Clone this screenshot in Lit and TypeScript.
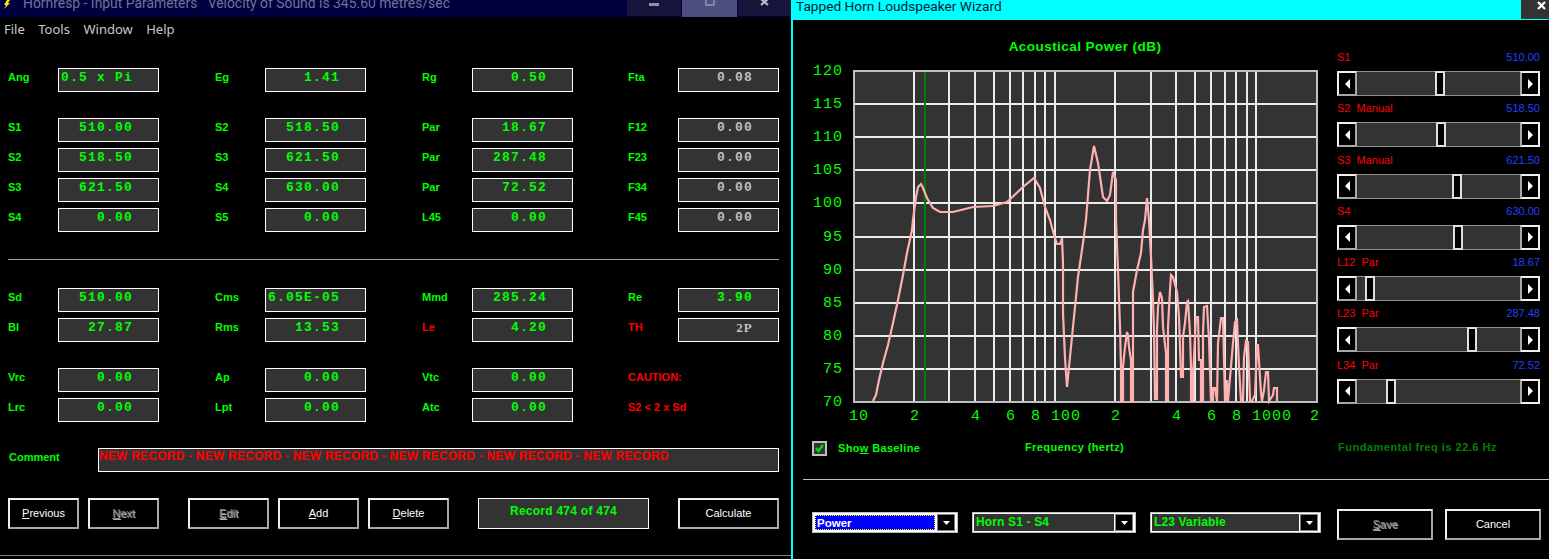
import { LitElement, html, css, svg } from 'lit';
import { customElement } from 'lit/decorators.js';

type Cell = { label: string; value?: string; left?: boolean; gray?: boolean; red?: boolean; serif?: boolean };
const c = (label: string, value?: string, opts: Partial<Cell> = {}): Cell => ({ label, value, ...opts });
const g = { gray: true };

const groups: Cell[][][] = [
  [[c('Ang', '0.5 x Pi', { left: true }), c('Eg', '1.41'), c('Rg', '0.50'), c('Fta', '0.08', g)]],
  [
    [c('S1', '510.00'), c('S2', '518.50'), c('Par', '18.67'), c('F12', '0.00', g)],
    [c('S2', '518.50'), c('S3', '621.50'), c('Par', '287.48'), c('F23', '0.00', g)],
    [c('S3', '621.50'), c('S4', '630.00'), c('Par', '72.52'), c('F34', '0.00', g)],
    [c('S4', '0.00'), c('S5', '0.00'), c('L45', '0.00'), c('F45', '0.00', g)],
  ],
];
const groups2: Cell[][][] = [
  [
    [c('Sd', '510.00'), c('Cms', '6.05E-05', { left: true }), c('Mmd', '285.24'), c('Re', '3.90')],
    [c('Bl', '27.87'), c('Rms', '13.53'), c('Le', '4.20', { red: true }), c('TH', '2P', { red: true, gray: true, serif: true })],
  ],
  [
    [c('Vrc', '0.00'), c('Ap', '0.00'), c('Vtc', '0.00'), c('CAUTION:', undefined, { red: true })],
    [c('Lrc', '0.00'), c('Lpt', '0.00'), c('Atc', '0.00'), c('S2 < 2 x Sd', undefined, { red: true })],
  ],
];

const sliders = [
  { name: 'S1', value: '510.00', thumb: 1435 },
  { name: 'S2  Manual', value: '518.50', thumb: 1436 },
  { name: 'S3  Manual', value: '621.50', thumb: 1452 },
  { name: 'S4', value: '630.00', thumb: 1453 },
  { name: 'L12  Par', value: '18.67', thumb: 1365 },
  { name: 'L23  Par', value: '287.48', thumb: 1467 },
  { name: 'L34  Par', value: '72.52', thumb: 1386 },
];

const gridX = [914, 949, 975, 994, 1010, 1023, 1035, 1045, 1055, 1115, 1151, 1176, 1195, 1211, 1225, 1236, 1247, 1256];
const yTicks = [120, 115, 110, 105, 100, 95, 90, 85, 80, 75, 70];
const xLabels: [string, number][] = [['10', 849], ['2', 910], ['4', 971], ['6', 1006], ['8', 1031], ['100', 1051], ['2', 1111], ['4', 1172], ['6', 1207], ['8', 1232], ['1000', 1252], ['2', 1310]];

const curve = `873,401 876,395 879,380 883,363 888,345 893,323 898,300 903,275 907,253 912,230 913,220 916,197 918,187 921,184 923,188
927,198 933,208 940,212 953,212 973,207 993,206 1007,202 1023,187 1034,178 1040,188 1045,207 1050,220 1054,235 1057,244 1060,244 1062,238
1063,263 1063,313 1065,358 1067,387 1068,377 1072,337 1075,307 1078,277 1083,243 1086,220 1090,170 1094,146 1098,163 1103,197 1107,201 1110,195
1113,172 1116,180 1116,220 1118,270 1120,327 1121,367 1121,402 1123,402 1123,367 1125,347 1127,332 1128,335 1129,347 1131,360 1131,402 1133,402 1133,292
1137,270 1141,253 1143,230 1145,220 1147,198 1149,220 1151,257 1153,300 1154,330 1155,399 1157,399 1157,330 1158,307 1160,292 1162,298 1163,327 1166,353
1166,401 1168,401 1168,327 1170,290 1171,275 1173,277 1177,292 1179,317 1181,377 1183,377 1183,337 1185,323 1187,302 1188,301 1190,333 1191,367 1191,401 1193,401 1193,377 1196,317
1198,317 1199,360 1201,360 1201,401 1203,401 1203,333 1204,307 1207,306 1209,340 1211,401 1213,401 1213,388 1215,388 1217,401 1218,343 1221,318 1223,318 1225,401 1227,401 1227,380
1228,401 1233,343 1235,322 1237,320 1239,367 1241,401 1243,401 1244,357 1246,341 1248,342 1250,401 1252,401 1255,395 1257,345 1258,345 1261,393 1262,401 1264,390
1266,372 1268,372 1269,401 1273,395 1274,388 1277,388 1277,401`;

const comment = Array(6).fill('NEW RECORD').join(' - ');

@customElement('app-root')
export class AppRoot extends LitElement {
  static styles = css`
    :host {
      display: flex;
      width: 1549px;
      height: 559px;
      overflow: hidden;
      background: #000;
      font-family: 'Liberation Sans', Arial, sans-serif;
      font-size: 11px;
    }

    /* left window */
    .left {
      width: 791px;
      height: 559px;
      flex: none;
      display: flex;
      flex-direction: column;
    }
    .title {
      height: 17px;
      flex: none;
      background: #00003f;
      display: flex;
      overflow: hidden;
    }
    .bolt {
      margin-left: 2px;
      width: 9px;
      height: 9px;
      flex: none;
    }
    .title-text {
      margin: -7px 0 0 12px;
      flex: 1;
      font: 13.9px/20px Roboto, sans-serif;
      color: #6f7299;
      white-space: pre;
    }
    .winbtn {
      height: 16px;
      margin-right: 1px;
      background: #15153c;
      flex: none;
      display: flex;
      justify-content: center;
      overflow: hidden;
    }
    .winbtn.max {
      height: 17px;
      background: #4f4f7f;
    }
    .menu {
      height: 24px;
      display: flex;
      align-items: center;
      font: 13px 'Noto Sans', sans-serif;
      color: #c8c8c8;
      padding-left: 4px;
    }
    .menu span {
      margin-right: 13.5px;
    }
    .form {
      display: flex;
      flex-direction: column;
      padding: 27px 0 0 8px;
    }
    .group {
      display: flex;
      flex-direction: column;
      gap: 6px;
      margin-bottom: 26px;
    }
    .row {
      display: flex;
    }
    .cell {
      width: 207px;
      display: flex;
      flex: none;
    }
    .cell:nth-child(3) {
      width: 206px;
    }
    .lab {
      width: 50px;
      flex: none;
      font-weight: 700;
      color: #0f0;
      line-height: 18px;
      white-space: nowrap;
    }
    .lab.red {
      color: #f00;
    }
    .field {
      width: 101px;
      height: 24px;
      box-sizing: border-box;
      flex: none;
      border: 1px solid #fff;
      background: #333;
      color: #0f0;
      font: 700 13px/17px 'Liberation Mono', monospace;
      letter-spacing: 1.2px;
      text-align: right;
      padding-right: 25px;
      white-space: pre;
    }
    .field.left {
      text-align: left;
      padding: 0 0 0 2px;
    }
    .field.gray {
      color: #c0c0c0;
    }
    .field.serif {
      font-family: 'Liberation Serif', serif;
    }
    .rule {
      height: 1px;
      background: #a0a0a0;
      width: 771px;
      margin: 1px 0 28px;
    }
    .comment-row {
      display: flex;
      margin-bottom: 26px;
    }
    .comment-row .lab {
      width: 90px;
      padding-left: 1px;
      box-sizing: border-box;
    }
    .comment {
      width: 681px;
      height: 24px;
      box-sizing: border-box;
      border: 1px solid #fff;
      background: #333;
      color: #f00;
      font-weight: 700;
      font-size: 12px;
      line-height: 15px;
      letter-spacing: 0.22px;
      white-space: nowrap;
      overflow: hidden;
    }
    .buttons {
      display: flex;
    }
    .btn {
      height: 31px;
      box-sizing: border-box;
      border: 2px solid #f0f0f0;
      border-right-color: #a8a8a8;
      border-bottom-color: #a8a8a8;
      padding-bottom: 2px;
      display: flex;
      align-items: center;
      justify-content: center;
      color: #fff;
      font-size: 11px;
      flex: none;
    }
    .btn.off {
      color: #858585;
      text-shadow: 1px 1px 0 #b0b0b0;
    }
    .btn u {
      text-underline-offset: 1px;
    }
    .record {
      width: 171px;
      height: 31px;
      box-sizing: border-box;
      border: 1px solid #fff;
      background: #333;
      color: #0f0;
      font-weight: 700;
      font-size: 12px;
      letter-spacing: 0.25px;
      text-align: center;
      line-height: 24px;
      flex: none;
    }
    .bottom-line {
      height: 1px;
      background: #808080;
      margin-top: 26px;
    }

    /* right window */
    .right {
      flex: 1;
      height: 559px;
      position: relative;
      border-left: 2px solid #0ff;
      display: flex;
      flex-direction: column;
    }
    .rtitle {
      height: 20px;
      flex: none;
      margin-left: -2px;
      background: #0ff;
      display: flex;
      justify-content: space-between;
      overflow: hidden;
    }
    .rtitle span {
      margin: -4px 0 0 5px;
      font: 13.7px/20px Roboto, sans-serif;
      color: #002030;
    }
    .close {
      width: 28px;
      height: 19px;
      background: #333;
      flex: none;
    }
    .body {
      height: 401px;
      flex: none;
      display: flex;
    }
    .chart {
      width: 544px;
      height: 401px;
      display: block;
      flex: none;
      overflow: visible;
    }
    .plot-bg {
      fill: #333;
      stroke: #c0c0c0;
      stroke-width: 2;
    }
    .grid {
      stroke: #ececec;
      stroke-width: 2;
      shape-rendering: crispEdges;
    }
    .marker {
      stroke: #008000;
      stroke-width: 2;
      shape-rendering: crispEdges;
    }
    .curve {
      fill: none;
      stroke: #ffb0b0;
      stroke-width: 2.2;
    }
    .tick {
      fill: #0f0;
      font: 15px 'Liberation Mono', monospace;
      letter-spacing: 1px;
    }
    .chart-title {
      fill: #0f0;
      font: 700 13.5px 'Liberation Sans', sans-serif;
      letter-spacing: 0.45px;
      text-anchor: middle;
    }
    .sliders {
      width: 203px;
      flex: none;
      padding-top: 30px;
      display: grid;
      grid-auto-rows: 51.28px;
    }
    .slabel {
      display: flex;
      justify-content: space-between;
      line-height: 14px;
      height: 14px;
      margin-bottom: 7px;
      white-space: pre;
      color: #f00;
    }
    .slabel b {
      font-weight: 400;
      color: #2040ff;
    }
    .slider {
      height: 25px;
      display: flex;
      position: relative;
    }
    .arrow {
      width: 20px;
      height: 25px;
      box-sizing: border-box;
      flex: none;
      background: #000;
      border: 2px solid #f0f0f0;
      border-right-color: #a8a8a8;
      border-bottom-color: #a8a8a8;
      display: flex;
      align-items: center;
      justify-content: center;
    }
    .arrow.next {
      border: 2px solid #f0f0f0;
      border-left-color: #a8a8a8;
    }
    .track {
      flex: 1;
      background: #333;
      border-top: 1px solid #909090;
      border-bottom: 1px solid #909090;
    }
    .thumb {
      position: absolute;
      top: 0;
      width: 10px;
      height: 25px;
      box-sizing: border-box;
      background: #000;
      border: 2px solid #e0e0e0;
    }
    .meta {
      height: 15px;
      margin-top: 20px;
      display: flex;
      align-items: center;
      color: #0f0;
      font-weight: 700;
      font-size: 11px;
      letter-spacing: 0.5px;
      padding-left: 19px;
      flex: none;
    }
    .check {
      width: 15px;
      height: 15px;
      box-sizing: border-box;
      border: 2px solid #c0c0c0;
      background: #333;
      flex: none;
      display: flex;
      align-items: center;
      justify-content: center;
      margin-right: 11px;
    }
    .meta .baseline {
      width: 187px;
      flex: none;
      letter-spacing: 0.35px;
      margin-bottom: 2px;
    }
    .meta .freq {
      width: 313px;
      flex: none;
      letter-spacing: 0.4px;
      margin-bottom: 3px;
    }
    .meta .fund {
      color: #008000;
      margin-bottom: 3px;
    }
    .rrule {
      height: 1px;
      background: #c0c0c0;
      margin: 23px 0 0 10px;
      flex: none;
    }
    .controls {
      display: flex;
      align-items: flex-start;
      margin-top: 29px;
      padding-left: 19px;
    }
    .combo {
      height: 21px;
      box-sizing: border-box;
      margin-top: 3px;
      border: 1px solid #c0c0c0;
      background: #fff;
      padding: 1px 2px 1px 1px;
      display: flex;
      flex: none;
    }
    .combo-text {
      flex: 1;
      background: #333;
      color: #0f0;
      font-weight: 700;
      font-size: 12px;
      line-height: 17px;
      letter-spacing: 0.15px;
      padding-left: 2px;
      white-space: nowrap;
    }
    .combo-text.sel {
      background: #00f;
      color: #fff;
      border: 1px dotted #ff0;
      margin: 1px;
      font-size: 11.5px;
      letter-spacing: 0;
      line-height: 14px;
      padding-left: 1px;
    }
    .combo-drop {
      width: 18px;
      box-sizing: border-box;
      flex: none;
      margin-left: 1px;
      background: #000;
      border: 1px solid #808080;
      display: flex;
      align-items: center;
      justify-content: center;
    }
  `;

  field(f: Cell) {
    if (f.value === undefined) return html`<div class="cell"><div class="lab red">${f.label}</div></div>`;
    return html`<div class="cell">
      <div class="lab ${f.red ? 'red' : ''}">${f.label}</div>
      <div class="field ${f.left ? 'left' : ''} ${f.gray ? 'gray' : ''} ${f.serif ? 'serif' : ''}">${f.value}</div>
    </div>`;
  }

  renderGroups(list: Cell[][][]) {
    return list.map(
      (rows) => html`<div class="group">
        ${rows.map((r) => html`<div class="row">${r.map((f) => this.field(f))}</div>`)}
      </div>`
    );
  }

  tri(dir: 'l' | 'r' | 'd') {
    const pts = { l: '5,0 5,10 0,5', r: '0,0 0,10 5,5', d: '0,0 7,0 3.5,4' }[dir];
    const w = dir === 'd' ? 7 : 5;
    const h = dir === 'd' ? 4 : 10;
    return html`<svg width=${w} height=${h} viewBox="0 0 ${w} ${h}"><polygon points=${pts} fill="#fff"></polygon></svg>`;
  }

  chart() {
    return html`<svg class="chart" viewBox="793 20 544 401">
      <text class="chart-title" x="1085" y="51">Acoustical Power (dB)</text>
      <rect class="plot-bg" x="854" y="71" width="463" height="331"></rect>
      ${yTicks.slice(1, -1).map((t) => {
        const y = 71 + ((120 - t) / 5) * 33.1;
        return svg`<line class="grid" x1="855" x2="1316" y1=${y} y2=${y}></line>`;
      })}
      ${gridX.map((x) => svg`<line class="grid" x1=${x} x2=${x} y1="72" y2="401"></line>`)}
      <line class="marker" x1="925" x2="925" y1="72" y2="401"></line>
      <polyline class="curve" points=${curve}></polyline>
      ${yTicks.map((t) => {
        const y = 71 + ((120 - t) / 5) * 33.1 + 4;
        const x = t >= 100 ? 813 : 823;
        return svg`<text class="tick" x=${x} y=${y}>${t}</text>`;
      })}
      ${xLabels.map(([t, x]) => svg`<text class="tick" x=${x} y="420">${t}</text>`)}
    </svg>`;
  }

  render() {
    return html`
      <div class="left">
        <div class="title">
          <svg class="bolt" viewBox="0 0 9 9"><polygon points="5,0 8,0 6,3 8,3 2,9 4,5 2,5" fill="#ffe81a"></polygon></svg>
          <div class="title-text">Hornresp - Input Parameters   Velocity of Sound is 345.60 metres/sec</div>
          <div class="winbtn" style="width:54px">
            <svg width="10" height="6"><rect y="3" width="10" height="3" fill="#8f8fa8"></rect></svg>
          </div>
          <div class="winbtn max" style="width:55px">
            <svg width="10" height="6"><rect x="1" y="-2" width="8" height="7" fill="none" stroke="#8080a8" stroke-width="2"></rect></svg>
          </div>
          <div class="winbtn" style="width:53px;margin:0">
            <svg width="10" height="6"><path d="M1 -1 L8 5 M8 -1 L1 5" stroke="#c0c0d0" stroke-width="2"></path></svg>
          </div>
        </div>
        <div class="menu">
          <span>File</span><span>Tools</span><span>Window</span><span>Help</span>
        </div>
        <div class="form">
          ${this.renderGroups(groups)}
          <div class="rule"></div>
          ${this.renderGroups(groups2)}
          <div class="comment-row">
            <div class="lab">Comment</div>
            <div class="comment">${comment}</div>
          </div>
          <div class="buttons">
            <div class="btn" style="width:71px;margin-right:9px"><span><u>P</u>revious</span></div>
            <div class="btn off" style="width:71px;margin-right:29px"><span><u>N</u>ext</span></div>
            <div class="btn off" style="width:81px;margin-right:9px"><span><u>E</u>dit</span></div>
            <div class="btn" style="width:81px;margin-right:9px"><span><u>A</u>dd</span></div>
            <div class="btn" style="width:81px;margin-right:29px"><span><u>D</u>elete</span></div>
            <div class="record" style="margin-right:29px">Record 474 of 474</div>
            <div class="btn" style="width:101px">Calculate</div>
          </div>
        </div>
        <div class="bottom-line"></div>
      </div>

      <div class="right">
        <div class="rtitle">
          <span>Tapped Horn Loudspeaker Wizard</span>
          <div class="close">
            <svg width="28" height="19"><path d="M17 2 L24 9 M24 2 L17 9" stroke="#fff" stroke-width="2.2"></path></svg>
          </div>
        </div>
        <div class="body">
          ${this.chart()}
          <div class="sliders">
            ${sliders.map(
              (s) => html`<div>
                <div class="slabel"><span>${s.name}</span><b>${s.value}</b></div>
                <div class="slider">
                  <div class="arrow">${this.tri('l')}</div>
                  <div class="track"></div>
                  <div class="arrow next">${this.tri('r')}</div>
                  <div class="thumb" style="left:${s.thumb - 1337}px"></div>
                </div>
              </div>`
            )}
          </div>
        </div>
        <div class="meta">
          <div class="check">
            <svg width="9" height="9" viewBox="0 0 9 9"><path d="M1 4 L3.5 7 L8 1" fill="none" stroke="#0d0" stroke-width="2.4"></path></svg>
          </div>
          <div class="baseline">Sho<u>w</u> Baseline</div>
          <div class="freq">Frequency (hertz)</div>
          <div class="fund">Fundamental freq is 22.6 Hz</div>
        </div>
        <div class="rrule"></div>
        <div class="controls">
          <div class="combo" style="width:146px;margin-right:14px">
            <div class="combo-text sel">Power</div>
            <div class="combo-drop">${this.tri('d')}</div>
          </div>
          <div class="combo" style="width:164px;margin-right:14px">
            <div class="combo-text">Horn S1 - S4</div>
            <div class="combo-drop">${this.tri('d')}</div>
          </div>
          <div class="combo" style="width:171px;margin-right:16px">
            <div class="combo-text">L23 Variable</div>
            <div class="combo-drop">${this.tri('d')}</div>
          </div>
          <div class="btn off" style="width:96px;margin-right:12px"><span><u>S</u>ave</span></div>
          <div class="btn" style="width:96px">Cancel</div>
        </div>
      </div>
    `;
  }
}
